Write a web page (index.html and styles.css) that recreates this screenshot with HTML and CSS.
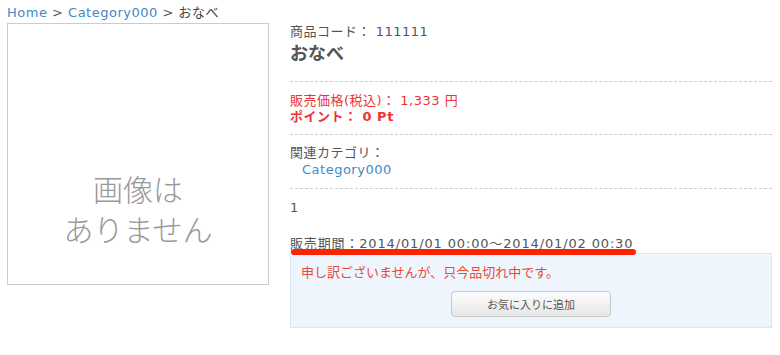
FILE: index.html
```html
<!DOCTYPE html>
<html lang="ja">
<head>
    <meta charset="UTF-8">
    <title>おなべ</title>
    <link rel="stylesheet" href="styles.css">
</head>
<body>
<div id="wrap">
    <div class="crumb">
        <a href="#">Home</a> &gt; <a href="#">Category000</a> &gt; <span>おなべ</span>
    </div>
    <div class="detail">
        <div class="photo">
            <p>画像は<br>ありません</p>
        </div>
        <div class="info">
            <div class="sec head">
                <p class="code">商品コード： <span>111111</span></p>
                <h1>おなべ</h1>
            </div>
            <div class="sec price">
                <p>販売価格(税込)： <span>1,333 円</span></p>
                <p class="point">ポイント： 0 Pt</p>
            </div>
            <div class="sec cat">
                <p>関連カテゴリ：</p>
                <p class="catlink"><a href="#">Category000</a></p>
            </div>
            <div class="sec misc">
                <p>1</p>
                <p class="term">販売期間：2014/01/01 00:00～2014/01/02 00:30<i class="mark"></i></p>
            </div>
            <div class="cart">
                <p class="soldout">申し訳ございませんが、只今品切れ中です。</p>
                <div class="btns"><button type="button">お気に入りに追加</button></div>
            </div>
        </div>
    </div>
</div>
</body>
</html>
```

FILE: styles.css
```css
*{
    margin: 0;
    padding: 0;
    box-sizing: border-box;
}
body{
    font-family: "DejaVu Sans", "Noto Sans CJK JP", sans-serif;
    font-size: 13px;
    color: #555;
    background: #fff;
}
a{
    color: #3f8ac4;
    text-decoration: none;
}
#wrap{
    padding: 4px 8px 0 7px;
}
.crumb{
    font-size: 13px;
    line-height: 18px;
    letter-spacing: 0.5px;
    color: #555;
}
.crumb span{
    color: #444;
}
.detail{
    display: flex;
    gap: 21px;
    margin-top: 1px;
}
.photo{
    width: 262px;
    height: 262px;
    border: 1px solid #ccc;
    padding-top: 144px;
    flex-shrink: 0;
}
.photo p{
    font-family: "Noto Sans CJK JP", sans-serif;
    font-weight: 300;
    font-size: 30px;
    line-height: 40px;
    color: #999;
    text-align: center;
}
.info{
    flex: 1;
    letter-spacing: 0.5px;
}
.sec{
    border-bottom: 1px dashed #ccc;
    line-height: 16px;
}
.head{
    padding: 0 0 14px;
}
.code{
    line-height: 18px;
}
h1{
    font-size: 18px;
    line-height: 26px;
    color: #555;
    letter-spacing: 0;
}
.price{
    padding: 11px 0 9px;
    color: #e33;
}
.point{
    font-weight: bold;
}
.cat{
    padding: 10px 0 10px;
}
.catlink{
    padding-left: 12px;
    margin-top: 1px;
}
.misc{
    border-bottom: none;
    padding: 11px 0 0;
}
.term{
    position: relative;
    margin-top: 20px;
    letter-spacing: 0.85px;
}
.mark{
    position: absolute;
    left: 1px;
    top: 13px;
    width: 345px;
    height: 6px;
    border-radius: 3px;
    background: #ff2200;
}
.cart{
    margin-top: 1px;
    background: #eef5fd;
    border: 1px solid #d3ebf5;
    padding: 11px 10px 10px;
}
.soldout{
    color: #e84a3a;
    line-height: 16px;
    letter-spacing: 0;
}
.btns{
    display: flex;
    justify-content: center;
    margin-top: 10px;
}
.btns button{
    width: 160px;
    height: 26px;
    border: 1px solid #c8c8c8;
    border-radius: 4px;
    background: linear-gradient(#fdfdfd, #e6e6e6);
    font-family: "Noto Sans CJK JP", sans-serif;
    font-size: 11px;
    color: #555;
}
```
